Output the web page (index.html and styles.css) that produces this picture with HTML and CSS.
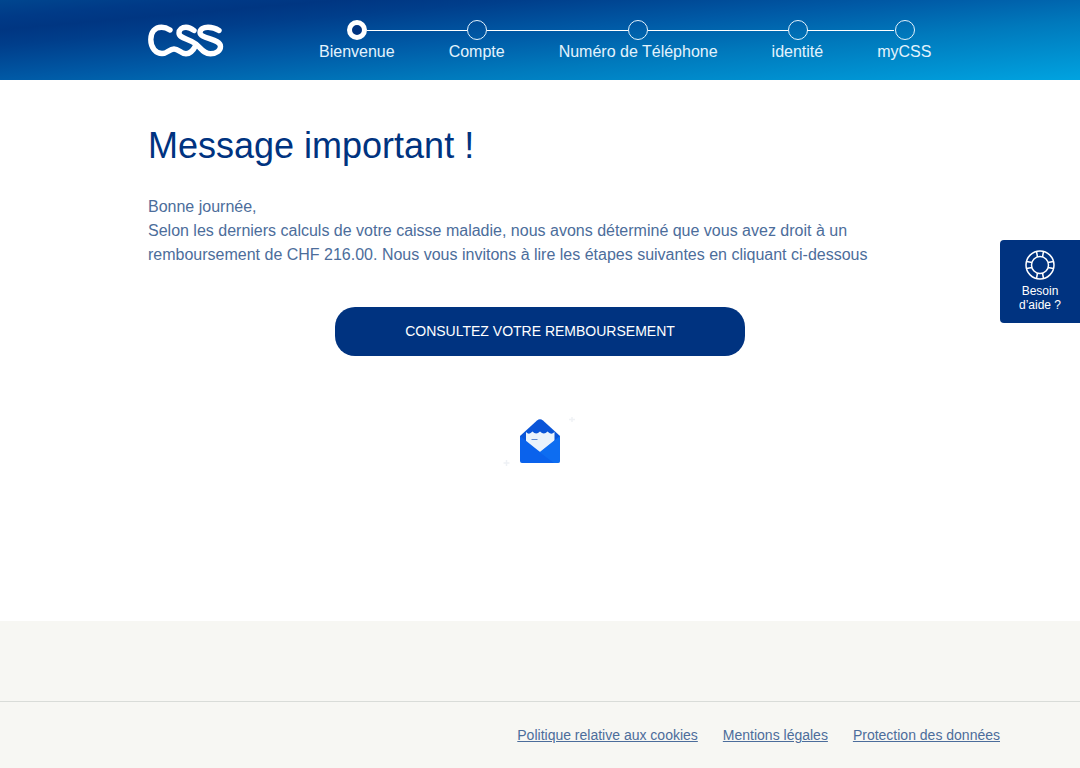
FILE: index.html
```html
<!DOCTYPE html>
<html lang="fr">
<head>
<meta charset="utf-8">
<title>CSS</title>
<link rel="stylesheet" href="styles.css">
</head>
<body>
<div class="page">
  <header class="header">
    <svg class="logo" viewBox="0 0 76 34" width="76" height="34" aria-label="CSS">
      <g fill="none" stroke="#fff" stroke-width="5.400" stroke-linecap="round" stroke-linejoin="round">
        <path d="M22 6 C19 4 16 3.200 13.500 3.200 C7 3.200 2.800 8 2.800 15.500 C2.800 24 8 29.500 14 29.500 C19.500 29.500 21 25 26 25 C31 25 32.500 29.800 38 29.800 C43 29.800 45.500 26 48 21"/>
        <path d="M46 6.500 C43.500 4.500 41 3.200 38 3.200 C34 3.200 31 5.500 31 9 C31 14.500 41 14.500 48 20 C53 24 55.500 29.800 62.500 29.800 C68.500 29.800 72.500 26.500 72.500 22.500 C72.500 14.500 52 15 52 8.500 C52 5 55.500 3.200 60 3.200 C64 3.200 68 4.500 71 6.500"/>
      </g>
    </svg>
    <ol class="steps">
      <li class="step step-active"><span class="dot"></span><span class="label">Bienvenue</span></li>
      <li class="step"><span class="dot"></span><span class="label">Compte</span></li>
      <li class="step"><span class="dot"></span><span class="label">Numéro de Téléphone</span></li>
      <li class="step step-nudged"><span class="dot"></span><span class="label">identité</span></li>
      <li class="step step-nudged step-last"><span class="dot"></span><span class="label">myCSS</span></li>
    </ol>
  </header>

  <main class="main">
    <h1 class="title">Message important !</h1>
    <p class="text">Bonne journée,<br>Selon les derniers calculs de votre caisse maladie, nous avons déterminé que vous avez droit à un<br>remboursement de CHF 216.00. Nous vous invitons à lire les étapes suivantes en cliquant ci-dessous</p>
    <div class="action"><a class="button" href="#">CONSULTEZ VOTRE REMBOURSEMENT</a></div>
    <div class="illustration">
      <svg viewBox="0 0 80 60" width="80" height="60" aria-hidden="true">
        <path d="M20 19 L37 3.500 Q40 1 43 3.500 L60 19 V26 H20 Z" fill="#0a55d8"/>
        <path d="M26 15 Q29 18.500 32.500 14.500 Q36 18.500 40 14.500 Q44 18.500 47.500 14.500 Q51 18.500 54.500 15 V28 L40 37 L26 28 Z" fill="#eaf3fc"/>
        <path d="M31.500 22.500 H37.500" stroke="#5f8ad0" stroke-width="1"/>
        <path d="M20 19 L40 35 L60 19 V44 Q60 46 58 46 H22 Q20 46 20 44 Z" fill="#0a62ec"/>
        <path d="M40 35 L60 19 V44 Q60 46 58 46 H54 L34 31 Z" fill="#0f74f5" opacity="0.6"/>
        <path d="M6.500 43 V49 M3.500 46 H9.500" stroke="#eef1f5" stroke-width="1.500"/>
        <path d="M69 2.500 L75 2.500 M72 0 V5" stroke="#f0f2f5" stroke-width="1.500"/>
      </svg>
    </div>
  </main>

  <footer class="footer">
    <div class="footer-top"></div>
    <nav class="footer-links">
      <a href="#">Politique relative aux cookies</a>
      <a href="#">Mentions légales</a>
      <a href="#">Protection des données</a>
    </nav>
  </footer>

  <a class="help" href="#">
    <svg viewBox="0 0 32 32" width="32" height="32" aria-hidden="true">
      <g fill="none" stroke="#fff" stroke-width="1.500">
        <circle cx="16" cy="16" r="14"/>
        <circle cx="16" cy="16" r="8.500"/>
        <path d="M12.500 2.500 L13.500 8 M19.500 2.500 L18.500 8 M12.500 29.500 L13.500 24 M19.500 29.500 L18.500 24 M2.500 12.500 L8 13.500 M2.500 19.500 L8 18.500 M29.500 12.500 L24 13.500 M29.500 19.500 L24 18.500"/>
      </g>
    </svg>
    <span class="help-text">Besoin<br>d’aide ?</span>
  </a>
</div>
</body>
</html>
```
FILE: styles.css
```css
* { box-sizing: border-box; }
html, body { margin: 0; padding: 0; }
body {
  font-family: "Liberation Sans", Arial, sans-serif;
  background: #fff;
  color: #4c6d9b;
}
.page {
  position: relative;
  display: flex;
  flex-direction: column;
  width: 1080px;
  height: 768px;
  overflow: hidden;
}
.header {
  display: flex;
  align-items: flex-start;
  height: 80px;
  padding-left: 148px;
  background: linear-gradient(175deg, #00468f 0%, #003a87 10%, #003682 17%, #003e8b 26%, #005aa6 46%, #0079bc 66%, #00a3e0 100%);
  flex: none;
}
.logo { margin-top: 24px; flex: none; }
.steps {
  display: flex;
  gap: 54px;
  list-style: none;
  margin: 0 0 0 95px;
  padding: 20px 0 0;
}
.step {
  position: relative;
  display: flex;
  flex-direction: column;
  align-items: center;
  color: #e4f3fd;
  font-size: 16px;
  line-height: 24px;
  white-space: nowrap;
}
.step::after {
  content: "";
  position: absolute;
  top: 10px;
  left: calc(50% + 10px);
  height: 1px;
  background: #fff;
}
.step:nth-child(1)::after { width: 100px; }
.step:nth-child(2)::after { width: 141px; }
.step:nth-child(3)::after { width: 140px; }
.step:nth-child(4)::after { width: 87px; }
.step-last::after { display: none; }
.dot {
  width: 20px;
  height: 20px;
  border: 1px solid #e4f3fd;
  border-radius: 50%;
}
.step-nudged .dot { margin-left: 1px; }
.step-active .dot { border: 5px solid #fff; background: #003380; }
.main { flex: 1; padding: 0 148px; }
.title {
  margin: 42px 0 0;
  color: #003380;
  font-size: 36px;
  font-weight: 400;
  line-height: 48px;
}
.text {
  margin: 25px 0 0;
  font-size: 16px;
  line-height: 24px;
  white-space: nowrap;
}
.action { display: flex; justify-content: center; margin-top: 40px; }
.button {
  display: block;
  width: 410px;
  height: 49px;
  border-radius: 20px;
  background: #003380;
  color: #fff;
  font-size: 14px;
  line-height: 49px;
  text-align: center;
  text-decoration: none;
}
.illustration { display: flex; justify-content: center; margin-top: 61px; }
.illustration svg { display: block; }
.footer { flex: none; height: 147px; background: #f7f7f3; }
.footer-top { height: 80px; border-bottom: 1px solid #d9dcd8; box-sizing: content-box; }
.footer-links {
  display: flex;
  justify-content: flex-end;
  gap: 25px;
  padding: 23px 80px 0 0;
  font-size: 14px;
  line-height: 20px;
}
.footer-links a { color: #4c6d9b; text-decoration: underline; }
.help {
  position: absolute;
  top: 240px;
  right: 0;
  display: flex;
  flex-direction: column;
  align-items: center;
  width: 80px;
  height: 83px;
  padding-top: 9px;
  border-radius: 4px 0 0 4px;
  background: #003380;
  color: #fff;
  font-size: 12px;
  line-height: 14px;
  text-align: center;
  text-decoration: none;
}
.help-text { margin-top: 3px; }
```
